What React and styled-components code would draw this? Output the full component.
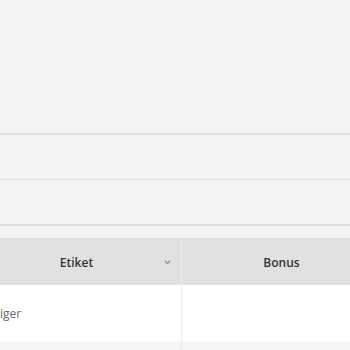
import styled, { createGlobalStyle } from "styled-components";

const Global = createGlobalStyle`
  html, body {
    margin: 0;
    padding: 0;
    background: #f3f3f3;
    font-family: "Open Sans", "Liberation Sans", sans-serif;
  }
  #root {
    width: 350px;
    height: 350px;
    overflow: hidden;
  }
`;

const Page = styled.div`
  display: flex;
  flex-direction: column;
  width: 350px;
  height: 350px;
  overflow: hidden;
  background: #f3f3f3;
`;

const Filler = styled.div`
  height: ${(p) => p.h}px;
  flex-shrink: 0;
  background: #f3f3f3;
  border-bottom: ${(p) => p.line}px solid #dddddd;
`;

const Table = styled.div`
  display: grid;
  grid-template-columns: 182px 1fr;
  flex-shrink: 0;
`;

const HeadCell = styled.div`
  height: 46px;
  display: flex;
  align-items: center;
  justify-content: center;
  position: relative;
  background: #e1e1e1;
  border-right: ${(p) => (p.divider ? "1px solid #ececec" : "none")};
  padding: ${(p) => p.pad};
  font-size: 12px;
  font-weight: 600;
  color: #333;
`;

const Chevron = styled.svg`
  position: absolute;
  right: 10px;
  top: 21px;
`;

const BodyCell = styled.div`
  height: 56px;
  display: flex;
  align-items: center;
  background: ${(p) => (p.alt ? "#f6f6f6" : "#fff")};
  border-right: ${(p) => (p.divider ? "1px solid #ececec" : "none")};
  font-size: 12px;
  color: #666;
`;

export default function App() {
  return (
    <>
      <Global />
      <Page>
        <Filler h={133} line={2} />
        <Filler h={44} line={1} />
        <Filler h={44} line={2} />
        <Filler h={12} line={1} />
        <Table>
          <HeadCell divider pad="0 28px 0 0">
            Etiket
            <Chevron width="7" height="5" viewBox="0 0 7 5">
              <path d="M1 1 L3.5 3.5 L6 1" fill="none" stroke="#888" strokeWidth="1.2" />
            </Chevron>
          </HeadCell>
          <HeadCell pad="0 0 0 31px">Bonus</HeadCell>
          <BodyCell divider>iger</BodyCell>
          <BodyCell />
          <BodyCell divider alt />
          <BodyCell alt />
        </Table>
      </Page>
    </>
  );
}
